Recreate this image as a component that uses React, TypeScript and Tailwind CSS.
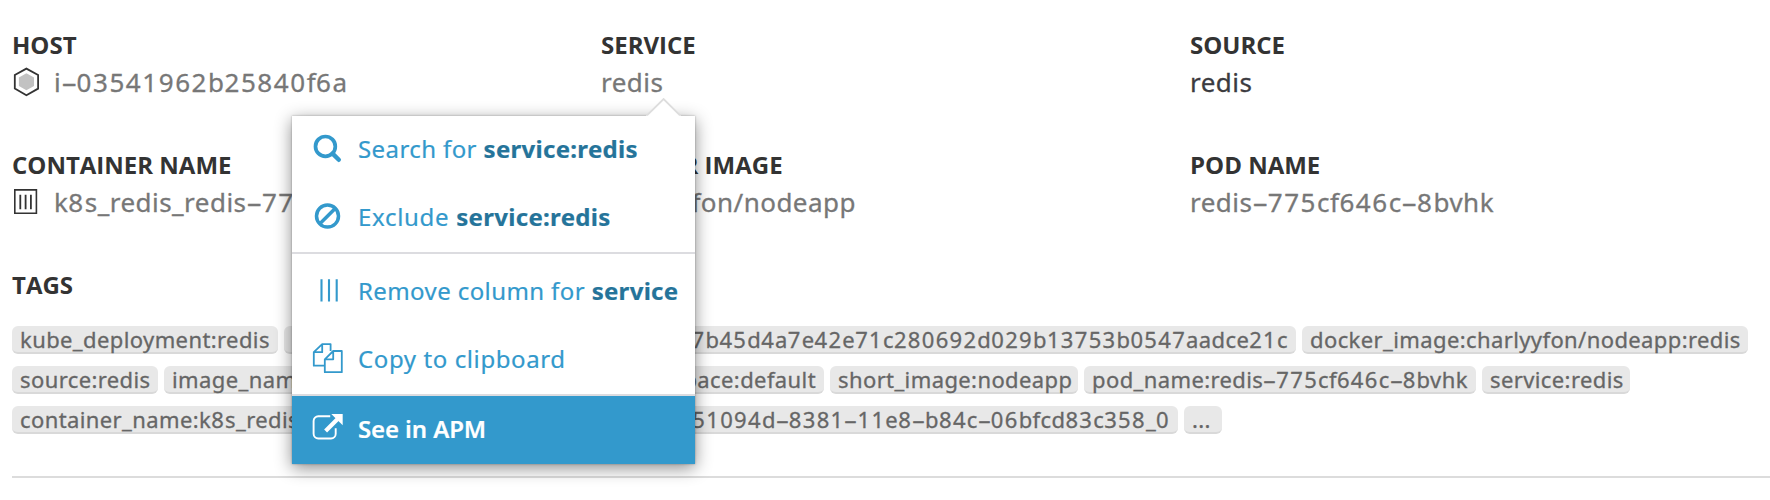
import React, { type ReactNode } from "react";
import clsx from "clsx";

/** Identifier text: digits are set wider than letters and dashes are stretched. */
function Ident({ children }: { children: string }) {
  const parts = children.split(/(\d+|-)/).filter(Boolean);
  return (
    <span className="whitespace-nowrap tracking-[0.018em]">
      {parts.map((part, i) =>
        part === "-" ? (
          <span key={i} className="mr-[0.14em] ml-[0.13em] inline-block scale-x-[1.9] tracking-normal">
            -
          </span>
        ) : /\d/.test(part) ? (
          <span key={i} className="tracking-[0.06em]">
            {part}
          </span>
        ) : (
          part
        ),
      )}
    </span>
  );
}

function Heading({ children }: { children: ReactNode }) {
  return (
    <h2 className="h-9 font-['Open_Sans',sans-serif] text-2xl leading-9 font-bold whitespace-nowrap text-[#333]">
      {children}
    </h2>
  );
}

function Field({ label, value, icon, dark }: { label: string; value: string; icon?: ReactNode; dark?: boolean }) {
  return (
    <div className="h-[74px]">
      <Heading>{label}</Heading>
      <div
        className={clsx(
          "flex h-[38px] text-[26px] leading-[38px] [-webkit-text-stroke:0.3px]",
          dark ? "text-[#3b3b40]" : "text-[#777]",
        )}
      >
        {icon && <span className="w-[42px] shrink-0">{icon}</span>}
        <Ident>{value}</Ident>
      </div>
    </div>
  );
}

function Tag({ children, className }: { children: string; className: string }) {
  return (
    <span
      className={clsx(
        "flex h-7 shrink-0 rounded-[6px] border-b-2 border-[#d9d9d9] bg-[#e8e8e8] px-2 text-[22px] leading-[27px] text-[#666] [-webkit-text-stroke:0.3px]",
        className,
      )}
    >
      <Ident>{children}</Ident>
    </span>
  );
}

function MenuItem({ icon, children, className }: { icon: ReactNode; children: ReactNode; className?: string }) {
  return (
    <button className={clsx("flex h-[68px] w-full items-center pb-[3px] pl-[18px] text-left text-2xl whitespace-nowrap", className)}>
      <span className="mr-3 w-9 shrink-0">{icon}</span>
      <span>{children}</span>
    </button>
  );
}

const HostIcon = () => (
  <svg width="30" height="38" viewBox="0 0 30 38" fill="none">
    <path d="M14.4 5.6 26.1 12v13.6l-11.7 6.6-11.6-6.6V12z" stroke="#333" strokeWidth="1.8" />
    <path d="M14.4 10.3 22 14.5v8.6l-7.6 4.2-7.5-4.2v-8.6z" fill="#c2c2c2" />
  </svg>
);

const ContainerIcon = () => (
  <svg width="30" height="38" viewBox="0 0 30 38" fill="none" stroke="#333">
    <path d="M2.8 6.9h21.6v23.4H2.8z" strokeWidth="1.6" />
    <path d="M8.3 11.8v14.4M13.6 11.8v14.4M18.9 11.8v14.4" strokeWidth="1.8" />
  </svg>
);

const SearchIcon = () => (
  <svg width="36" height="36" viewBox="0 0 36 36" fill="none" stroke="currentColor">
    <circle cx="15.4" cy="15.4" r="9.9" strokeWidth="3.7" />
    <path d="m22.6 22.6 6.2 6.2" strokeWidth="4.4" strokeLinecap="round" />
  </svg>
);

const BanIcon = () => (
  <svg width="36" height="36" viewBox="0 0 36 36" fill="none" stroke="currentColor" strokeWidth="3.5">
    <circle cx="17.5" cy="17.1" r="11" />
    <path d="m9.6 25 15.8-15.8" />
  </svg>
);

const ColumnsIcon = () => (
  <svg width="36" height="36" viewBox="0 0 36 36" fill="none" stroke="currentColor" strokeWidth="2.1">
    <path d="M11.5 6.3v22.2M19 6.3v22.2M26.7 6.3v22.2" />
  </svg>
);

const CopyIcon = () => (
  <svg width="36" height="36" viewBox="0 0 36 36" fill="none" stroke="currentColor" strokeWidth="1.8" strokeLinejoin="round">
    <path d="M14.7 24.7H3.8V11.2l8.4-8.1h8.4v7M12.2 3.1v8.1H3.8" />
    <path d="M23.2 10h8.6v21.2H14.8V18.3zM23.2 10v8.3h-8.4" />
  </svg>
);

const ExternalIcon = () => (
  <svg width="36" height="36" viewBox="0 0 36 36" fill="none">
    <path
      d="M20.2 5.3H8.3a4.7 4.7 0 0 0-4.7 4.7v12.8a4.7 4.7 0 0 0 4.7 4.7H21a4.7 4.7 0 0 0 4.7-4.7v-5.6"
      stroke="currentColor"
      strokeWidth="1.9"
    />
    <path d="m15.6 19.9 12-12" stroke="currentColor" strokeWidth="4.2" />
    <path d="M21.3 3H32.7v11.3z" fill="currentColor" />
  </svg>
);

const Key = ({ children }: { children: string }) => (
  <strong className="font-bold tracking-[0.3px] text-[#25749a]">{children}</strong>
);

function ContextMenu() {
  return (
    <div className="absolute top-[116px] left-[292px] z-10 w-[403px] bg-white tracking-[0.4px] text-[#39c] shadow-[0_4px_16px_rgba(0,0,0,0.45),0_0_2px_rgba(0,0,0,0.3)] [-webkit-text-stroke:0.2px]">
      <svg className="absolute -top-[18px] left-[354px]" width="36" height="20" viewBox="0 0 36 20">
        <path d="M0 18 17.6 1 35 18v2H0z" fill="#fff" />
        <path d="M1 17.3 17.6 1 34 17.3" fill="none" stroke="#ddd" strokeWidth="1.8" />
      </svg>
      <MenuItem icon={<SearchIcon />}>
        Search for <Key>service:redis</Key>
      </MenuItem>
      <MenuItem icon={<BanIcon />} className="tracking-[0.7px]">
        Exclude <Key>service:redis</Key>
      </MenuItem>
      <div className="border-t-2 border-[#dcdce0] pt-1">
        <MenuItem icon={<ColumnsIcon />}>
          Remove column for <Key>service</Key>
        </MenuItem>
        <MenuItem icon={<CopyIcon />} className="tracking-[0.6px]">
          Copy to clipboard
        </MenuItem>
      </div>
      <div className="border-t-2 border-[#dcdce0]">
        <MenuItem icon={<ExternalIcon />} className="bg-[#39c] font-semibold tracking-[-0.1px] text-white">
          See in APM
        </MenuItem>
      </div>
    </div>
  );
}

export default function App() {
  return (
    <main className="relative h-[500px] overflow-hidden bg-white pt-[27px] pl-3 font-['Noto_Sans',sans-serif]">
      <div className="grid w-[1767px] grid-cols-3 gap-y-[46px]">
        <Field label="HOST" value="i-03541962b25840f6a" icon={<HostIcon />} />
        <Field label="SERVICE" value="redis" />
        <Field label="SOURCE" value="redis" dark />
        <Field label="CONTAINER NAME" value="k8s_redis_redis-775cf646c" icon={<ContainerIcon />} />
        <Field label="DOCKER IMAGE" value="charlyyfon/nodeapp" />
        <Field label="POD NAME" value="redis-775cf646c-8bvhk" />
      </div>
      <section className="mt-[46px]">
        <Heading>TAGS</Heading>
        <div className="mt-[23px] flex flex-col gap-3">
          <div className="flex gap-1.5">
            <Tag className="w-[266px]">kube_deployment:redis</Tag>
            <Tag className="w-[1012px] justify-end">
              container_id:9f3c61b8e2d74a05c1e7b45d4a7e42e71c280692d029b13753b0547aadce21c
            </Tag>
            <Tag className="w-[446px]">docker_image:charlyyfon/nodeapp:redis</Tag>
          </div>
          <div className="flex gap-1.5">
            <Tag className="w-[146px]">source:redis</Tag>
            <Tag className="w-[388px]">image_name:charlyyfon/nodeapp</Tag>
            <Tag className="w-[266px] justify-end">kube_namespace:default</Tag>
            <Tag className="w-[248px]">short_image:nodeapp</Tag>
            <Tag className="w-[392px]">pod_name:redis-775cf646c-8bvhk</Tag>
            <Tag className="w-[148px]">service:redis</Tag>
          </div>
          <div className="flex gap-1.5">
            <Tag className="w-[400px] rounded-r-none">container_name:k8s_redis_redis</Tag>
            <Tag className="-ml-1.5 w-[766px] justify-end rounded-l-none">
              _default_5a51094d-8381-11e8-b84c-06bfcd83c358_0
            </Tag>
            <Tag className="w-[38px]">...</Tag>
          </div>
        </div>
      </section>
      <hr className="mt-[42px] border-t-2 border-[#dcdcdc]" />
      <ContextMenu />
    </main>
  );
}
